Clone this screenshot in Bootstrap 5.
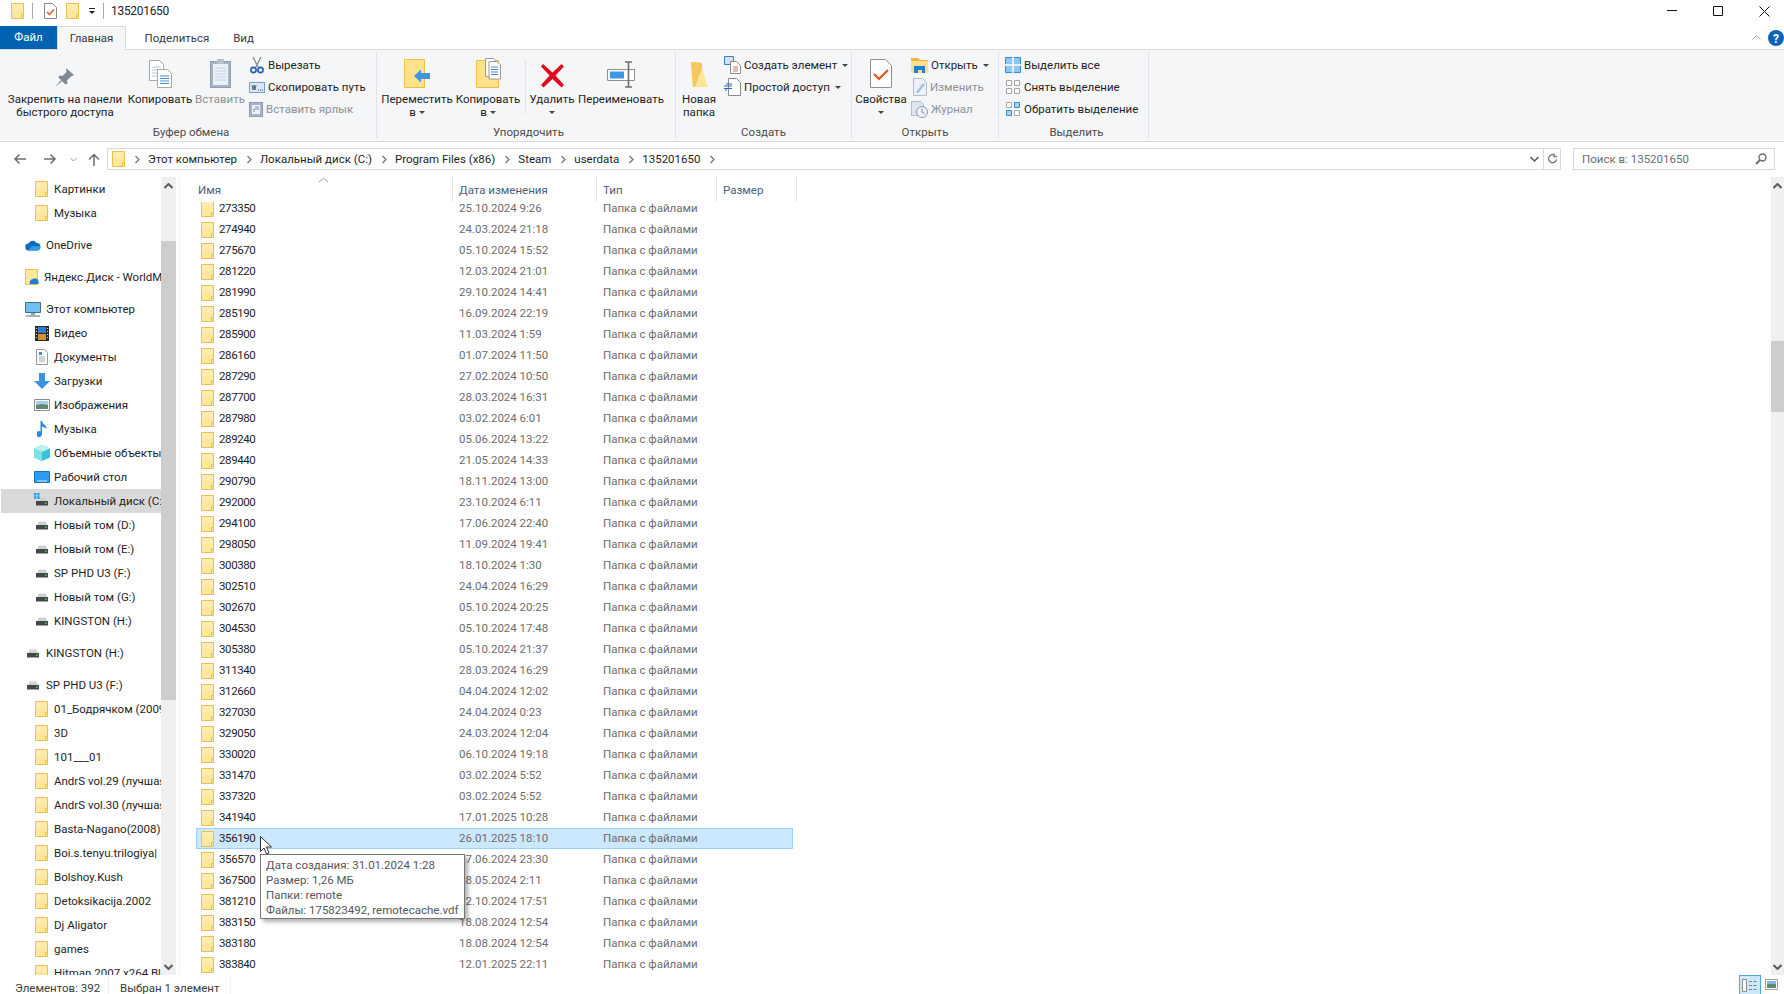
<!DOCTYPE html>
<html lang="ru">
<head>
<meta charset="UTF-8">
<meta name="viewport" content="width=device-width, initial-scale=1.0">
<title>135201650</title>
<link href="https://cdn.jsdelivr.net/npm/bootstrap@5.3.0/dist/css/bootstrap.min.css" rel="stylesheet">
<style>
    html, body { height: 100%; }
    body {
        font-family: Roboto, "Liberation Sans", sans-serif;
        font-size: 11.5px;
        line-height: 13px;
        color: #1e1e1e;
        background: #fff;
        overflow: hidden;
    }
    svg { display: block; flex: none; }

    /* title bar */
    .title-bar { height: 26px; padding: 0 0 4px 11px; }
    .title-sep { width: 1px; height: 16px; background: #a9a9a9; margin-left: 8px; }
    .qa-check { margin-left: 11px; }
    .qa-folder { margin-left: 9px; }
    .qa-drop { margin-left: 9px; }
    .title-sep.after-drop { margin-left: 7px; }
    .title-text { margin-left: 7px; letter-spacing: -.3px; font-size: 12px; }
    .win-btns { margin-right: -3px; }
    .win-btn { width: 46px; height: 22px; display: flex; align-items: center; justify-content: center; }

    /* tabs */
    .tab-strip { height: 24px; border-bottom: 1px solid #dadbdc; }
    .tab-item { height: 24px; display: flex; align-items: center; justify-content: center; color: #3b3b3b; }
    .tab-file { width: 57px; background: #0063b1; color: #fff; height: 23px; }
    .tab-home { width: 69px; background: #f5f6f7; border: 1px solid #dadbdc; border-bottom: 0; }
    .tab-share { width: 95px; padding-left: 7px; }
    .tab-view { width: 45px; }
    .tab-tools { gap: 7px; }

    /* ribbon */
    .ribbon { height: 92px; background: #f5f6f7; border-bottom: 1px solid #dadbdc; padding-top: 2px; }
    .rb-group { height: 86px; display: flex; flex-direction: column; border-right: 1px solid #e1e3e6; }
    .rb-items { display: flex; flex-grow: 1; }
    .rb-label { text-align: center; color: #4c4c4c; line-height: 12px; height: 12px; }
    .rb-big { display: flex; flex-direction: column; align-items: center; text-align: center; white-space: nowrap; }
    .rb-icon { height: 41px; display: flex; align-items: flex-end; padding-bottom: 5px; }
    .rb-big .caret-line { height: 13px; display: flex; align-items: center; justify-content: center; gap: 3px; }
    .rb-small { padding-top: 2px; }
    .rb-small.after-clip { margin-left: 5px; }
    .rb-small.after-new { margin-left: 2px; }
    .rb-small.after-prop { margin-left: 1px; }
    .rb-row { height: 22px; display: flex; align-items: center; white-space: nowrap; }
    .rb-row svg:first-child { margin-right: 3px; }
    .rb-row .ico-shortcut { margin-right: 5px; }
    .rb-row .ico-edit { margin: 0 5px 0 2px; }
    .muted-text { color: #8d9196; }
    .tri { width: 0; height: 0; border-left: 3px solid transparent; border-right: 3px solid transparent; border-top: 3px solid #444; display: inline-block; flex: none; margin-left: 5px; }
    .caret-line .tri { margin-left: 0; }
    .rb-vline { width: 1px; height: 55px; background: #e1e3e6; margin: 7px 1px 0; }
    .g-clip { width: 377px; padding-left: 6px; }
    .g-org { width: 299px; padding-left: 5px; }
    .g-new { width: 176px; }
    .g-open { width: 147px; }
    .g-sel { width: 150px; padding-left: 6px; }
    .w-pin { width: 118px; } .w-copy { width: 72px; } .w-paste { width: 48px; }
    .w-move { width: 70px; } .w-copyto { width: 72px; } .w-del { width: 50px; } .w-ren { width: 88px; }
    .w-newf { width: 46px; } .w-prop { width: 58px; }

    /* address bar */
    .addr-row { height: 35px; padding: 6px 9px 7px 0; }
    .nav-zone { width: 107px; padding-left: 13px; }
    .nav-fwd { margin-left: 16px; }
    .nav-drop { margin-left: 13px; }
    .nav-up { margin-left: 11px; }
    .addr-box { width: 1454px; height: 22px; border: 1px solid #d9d9d9; display: flex; align-items: center; }
    .addr-path { flex-grow: 1; display: flex; align-items: center; padding-left: 4px; white-space: nowrap; }
    .crumb-arrow { margin: 0 8px 0 10px; }
    .addr-end { width: 17px; height: 20px; border-left: 1px solid #d9d9d9; display: flex; align-items: center; justify-content: center; }
    .search-box { width: 202px; height: 22px; border: 1px solid #d9d9d9; margin-left: 12px; display: flex; align-items: center; justify-content: space-between; padding: 0 7px 0 8px; color: #6d6d6d; }

    /* main area */
    .main-area { height: 798px; }
    .side-pane { width: 161px; overflow: hidden; }
    .tree-row { height: 24px; display: flex; align-items: center; white-space: nowrap; overflow: hidden; }
    .tree-row.lvl1 { padding-left: 25px; }
    .tree-row.lvl2 { padding-left: 35px; }
    .tree-row.gap-top { margin-top: 8px; }
    .tree-row.current { background: #d9d9d9; margin-left: 1px; padding-left: 34px; }
    .tree-ico { width: 16px; height: 16px; display: flex; align-items: center; justify-content: center; margin-right: 5px; }
    .lvl2 .tree-ico { width: 13px; margin-right: 6px; }
    .vscroll { background: #f0f0f0; display: flex; flex-direction: column; align-items: center; }
    .vscroll .arr { height: 17px; display: flex; align-items: center; justify-content: center; width: 100%; }
    .vscroll .arr-down { margin-top: auto; }
    .side-scroll { width: 15px; }
    .side-thumb { width: 100%; height: 459px; margin-top: 47px; background: #cdcdcd; }
    .file-scroll { width: 13px; }
    .file-thumb { width: 100%; height: 71px; margin-top: 147px; background: #cdcdcd; }
    .pane-gap { width: 20px; }
    .pane-gap div { width: 1px; height: 100%; background: #f2f2f2; margin-left: 3px; }
    .files-pane { flex-grow: 1; overflow: hidden; }
    .col-head { height: 25px; display: flex; }
    .col-head > div { display: flex; align-items: center; padding: 2px 0 0 6px; color: #4c607a; border-right: 1px solid #e5e5e5; }
    .col-head > div:first-child { padding-left: 2px; }
    .c-name { width: 257px; }
    .c-date { width: 144px; }
    .c-type { width: 120px; }
    .c-size { width: 80px; }
    .file-list { height: 773px; overflow: hidden; }
    .file-rows { margin-top: -4px; }
    .file-row { width: 597px; height: 21px; display: flex; align-items: center; white-space: nowrap; }
    .file-row .c-name { display: flex; align-items: center; gap: 5px; padding-left: 5px; letter-spacing: -.4px; }
    .file-row .c-date, .file-row .c-type { padding-left: 6px; color: #6d6d6d; }
    .file-row.picked { background: #cce8ff; box-shadow: inset 0 0 0 1px #99d1ff; }

    /* status bar */
    .status-bar { height: 19px; }
    .status-cell { padding: 7px 0 0 15px; width: 109px; height: 19px; display: flex; align-items: center; color: #3c3c3c; border-right: 1px solid #f0f0f0; }
    .status-cell + .status-cell { padding-left: 11px; width: 122px; }
    .view-btns { padding-right: 6px; gap: 4px; }
    .view-on { width: 22px; height: 19px; background: #cce8f7; border: 1px solid #4aa8dc; border-bottom: 0; display: flex; align-items: center; justify-content: center; }

    /* overlays */
    .hover-tip {
        position: absolute; left: 260px; top: 854px; width: 205px; height: 65px;
        background: #fff; border: 1px solid #767676; box-shadow: 3px 3px 4px rgba(0,0,0,.3);
        color: #575757; padding: 3px 5px; line-height: 15px; white-space: nowrap;
    }
    .mouse-arrow { position: absolute; left: 260px; top: 836px; }
    .sort-mark { position: absolute; left: 318px; top: 177px; }
</style>
</head>
<body class="d-flex flex-column position-relative">

<svg width="0" height="0" class="position-absolute">
    <symbol id="fld" viewBox="0 0 13 16">
        <path d="M.5.5h12v15H.5z" fill="#ffe79c" stroke="#eac14f"/>
        <path d="M1 1h11v6H1z" fill="#fff0b8" opacity=".7"/>
        <path d="M10.500 15v-3.500h2" fill="none" stroke="#eac14f"/>
    </symbol>
    <symbol id="drv" viewBox="0 0 16 16">
        <path d="M3 8 4.500 4.500h7L13 8z" fill="#cfd1d3"/>
        <path d="M2 8h12v4.500H2z" fill="#45484a"/>
        <path d="M11 9.500h1.500v1.500H11z" fill="#4fd24f"/>
    </symbol>
    <symbol id="grid-off" viewBox="0 0 16 16">
        <path d="M1.500 1.500h5v5h-5zM9.500 1.500h5v5h-5zM1.500 9.500h5v5h-5zM9.500 9.500h5v5h-5z" fill="#fff" stroke="#a5a5a5"/>
    </symbol>
    <symbol id="crumb" viewBox="0 0 5 9">
        <path d="M.5 1l3.500 3.500L.5 8" fill="none" stroke="#777" stroke-width="1.300"/>
    </symbol>
</svg>

<!-- Title bar -->
<div class="title-bar d-flex align-items-center">
    <svg width="13" height="16"><use href="#fld"/></svg>
    <div class="title-sep"></div>
    <svg class="qa-check" width="13" height="16" viewBox="0 0 13 16">
        <path d="M.5.5h8l4 4v11H.5z" fill="#fff" stroke="#8a8a8a"/>
        <path d="M3 9l2.500 2.500L10 6.500" fill="none" stroke="#e2552a" stroke-width="1.500"/>
    </svg>
    <svg class="qa-folder" width="13" height="16"><use href="#fld"/></svg>
    <svg class="qa-drop" width="8" height="8" viewBox="0 0 8 8">
        <path d="M1 1.500h6" stroke="#222"/><path d="M1 4h6L4 7z" fill="#222"/>
    </svg>
    <div class="title-sep after-drop"></div>
    <span class="title-text">135201650</span>
    <div class="ms-auto d-flex win-btns">
        <div class="win-btn"><svg width="10" height="2"><path d="M0 .5h10" stroke="#111"/></svg></div>
        <div class="win-btn"><svg width="10" height="10"><path d="M.5.5h9v9h-9z" fill="none" stroke="#111"/></svg></div>
        <div class="win-btn"><svg width="11" height="11"><path d="M.5.5l10 10M10.500.5l-10 10" stroke="#111"/></svg></div>
    </div>
</div>

<!-- Tabs -->
<div class="tab-strip d-flex">
    <div class="tab-item tab-file">Файл</div>
    <div class="tab-item tab-home">Главная</div>
    <div class="tab-item tab-share">Поделиться</div>
    <div class="tab-item tab-view">Вид</div>
    <div class="ms-auto d-flex align-items-center tab-tools">
        <svg width="9" height="5"><path d="M.5 4.500l4-4 4 4" fill="none" stroke="#a8a8a8"/></svg>
        <svg width="16" height="16" viewBox="0 0 16 16">
            <circle cx="8" cy="8" r="8" fill="#0a63b5"/>
            <text x="8" y="12.500" text-anchor="middle" fill="#fff" font-family="Roboto" font-weight="700" font-size="12">?</text>
        </svg>
    </div>
</div>

<!-- Ribbon -->
<div class="ribbon d-flex">
    <div class="rb-group g-clip">
        <div class="rb-items">
            <div class="rb-big w-pin">
                <div class="rb-icon"><svg width="22" height="21" viewBox="0 0 22 21">
                    <path d="M12 1l8 7-3 1.500-4 4 .5 3-2 1-7-7 1-2 3 .5 4-4z" fill="#7f8896"/>
                    <path d="M7 12.500L1 20l7-5.500z" fill="#9aa2ad"/>
                </svg></div>
                Закрепить на панели<br>быстрого доступа
            </div>
            <div class="rb-big w-copy">
                <div class="rb-icon"><svg width="23" height="28" viewBox="0 0 23 28">
                    <path d="M.5.5h10l4 4v16H.5z" fill="#fff" stroke="#a7a7a7"/>
                    <path d="M3 7h9M3 10h9M3 13h9M3 16h9" stroke="#b9c6d8"/>
                    <path d="M8.500 9.500h10l4 4v14h-14z" fill="#fff" stroke="#a7a7a7"/>
                    <path d="M11 16h9M11 18.500h9M11 21h9M11 23.500h9" stroke="#4d86d4" stroke-width="1.200"/>
                </svg></div>
                Копировать
            </div>
            <div class="rb-big w-paste muted-text">
                <div class="rb-icon"><svg width="21" height="30" viewBox="0 0 21 30">
                    <rect x=".5" y="3.500" width="20" height="26" fill="#a7b3c6" stroke="#8e9bb0"/>
                    <rect x="3" y="6" width="15" height="21" fill="#eaf0f8"/>
                    <path d="M5 10h11M5 13h11M5 16h11M5 19h11M5 22h11" stroke="#c6d3e6"/>
                    <rect x="7" y="1" width="7" height="5" fill="#b7bfcb"/>
                </svg></div>
                Вставить
            </div>
            <div class="rb-small after-clip">
                <div class="rb-row"><svg width="16" height="18" viewBox="0 0 16 18">
                    <path d="M4 1l5 10M12 1L7 11" stroke="#8b8b8b" stroke-width="1.300"/>
                    <circle cx="4.500" cy="14" r="2.600" fill="none" stroke="#1f5fb4" stroke-width="1.600"/>
                    <circle cx="11.500" cy="14" r="2.600" fill="none" stroke="#1f5fb4" stroke-width="1.600"/>
                </svg>Вырезать</div>
                <div class="rb-row"><svg width="16" height="11" viewBox="0 0 16 11">
                    <path d="M.5.5h15v10H.5z" fill="#dbe9f7" stroke="#6fa0d2"/>
                    <path d="M3 3l1 5 1-5 1 5 1-5" fill="none" stroke="#4b4b4b" stroke-width=".8"/>
                    <path d="M9 8h1M11 8h1M13 8h1" stroke="#4b4b4b"/>
                </svg>Скопировать путь</div>
                <div class="rb-row muted-text"><svg class="ico-shortcut" width="14" height="16" viewBox="0 0 14 16">
                    <rect x=".5" y="1.500" width="13" height="14" fill="#a9b6c9" stroke="#8e9bb0"/>
                    <rect x="3" y="4" width="8" height="9" fill="#eef2f8"/>
                    <path d="M5 11V8h3M6 6h3v3" fill="none" stroke="#7f8fa6"/>
                </svg>Вставить ярлык</div>
            </div>
        </div>
        <div class="rb-label">Буфер обмена</div>
    </div>

    <div class="rb-group g-org">
        <div class="rb-items">
            <div class="rb-big w-move">
                <div class="rb-icon"><svg width="27" height="29" viewBox="0 0 27 29">
                    <path d="M.5.5h20v28H.5z" fill="#ffe28a" stroke="#e9bf4c"/>
                    <path d="M10 17l7-6.500V14h9v6h-9v3.500z" fill="#3f96e3"/>
                </svg></div>
                Переместить
                <div class="caret-line">в <span class="tri"></span></div>
            </div>
            <div class="rb-big w-copyto">
                <div class="rb-icon"><svg width="25" height="31" viewBox="0 0 25 31">
                    <path d="M.5 3.500h22v27H.5z" fill="#ffe28a" stroke="#e9bf4c"/>
                    <path d="M9.500 1.500h8l4 4v14h-12z" fill="#fff" stroke="#9a9a9a"/>
                    <path d="M13 4.500h8l3.500 3.500v14H13z" fill="#fff" stroke="#9a9a9a"/>
                    <path d="M15 10h7M15 12.500h7M15 15h7M15 17.500h7" stroke="#4d86d4"/>
                </svg></div>
                Копировать
                <div class="caret-line">в <span class="tri"></span></div>
            </div>
            <div class="rb-vline"></div>
            <div class="rb-big w-del">
                <div class="rb-icon"><svg width="25" height="25" viewBox="0 0 25 25">
                    <path d="M3 1l9.500 8.500L21.500 1 24 3.500 15.500 12.500 24 22l-2.500 2.500-9-8.500-9 8.500L1 22l8.500-9.500L1 3.500z" fill="#df0c1d"/>
                </svg></div>
                Удалить
                <div class="caret-line"><span class="tri"></span></div>
            </div>
            <div class="rb-big w-ren">
                <div class="rb-icon"><svg width="29" height="27" viewBox="0 0 29 27">
                    <path d="M.5 8.500h27v11H.5z" fill="#fff" stroke="#8f8f8f"/>
                    <rect x="3" y="10.500" width="14" height="7" fill="#3f96e3"/>
                    <path d="M18 1h7M18 26h7M21.500 1v25" stroke="#6f6f6f" stroke-width="1.600"/>
                </svg></div>
                Переименовать
            </div>
        </div>
        <div class="rb-label">Упорядочить</div>
    </div>

    <div class="rb-group g-new">
        <div class="rb-items">
            <div class="rb-big w-newf">
                <div class="rb-icon"><svg width="19" height="27" viewBox="0 0 19 27">
                    <path d="M1 1l11 1v6l5 17-14 1z" fill="#ffd970"/>
                    <path d="M1 1l11 1v6L5 26H3z" fill="#f4c95a"/>
                    <path d="M12 8l6 18H5z" fill="#ffe596"/>
                </svg></div>
                Новая<br>папка
            </div>
            <div class="rb-small after-new">
                <div class="rb-row"><svg width="17" height="18" viewBox="0 0 17 18">
                    <path d="M.5.5h9v8h-9z" fill="#cfe3f6" stroke="#3b7fc4"/>
                    <path d="M6.500 5.500h6l4 4v8h-10z" fill="#fff" stroke="#8a8a8a"/>
                    <path d="M9 11h5M9 13h5M9 15h5" stroke="#c77"/>
                </svg>Создать элемент<span class="tri"></span></div>
                <div class="rb-row"><svg width="17" height="18" viewBox="0 0 17 18">
                    <path d="M4.500.5h8l4 4v13h-12z" fill="#fff" stroke="#8a8a8a"/>
                    <path d="M0 8h8M2 6h6M0 10.500h8M2 10v3" stroke="#2b6cb4"/>
                </svg>Простой доступ<span class="tri"></span></div>
            </div>
        </div>
        <div class="rb-label">Создать</div>
    </div>

    <div class="rb-group g-open">
        <div class="rb-items">
            <div class="rb-big w-prop">
                <div class="rb-icon"><svg width="22" height="29" viewBox="0 0 22 29">
                    <path d="M.5.500h15l6 6v22H.5z" fill="#fff" stroke="#8f8f8f"/>
                    <path d="M4 15l5 5 9-9" fill="none" stroke="#e8521f" stroke-width="2.200"/>
                </svg></div>
                Свойства
                <div class="caret-line"><span class="tri"></span></div>
            </div>
            <div class="rb-small after-prop">
                <div class="rb-row"><svg width="17" height="15" viewBox="0 0 17 15">
                    <path d="M0 0h7l2 2h8v13H0z" fill="#f2b43a"/>
                    <path d="M0 3h17v12H0z" fill="#ffe08a"/>
                    <path d="M3 8h11v7h-3v-3H7v3H3z" fill="#1e7fd0"/>
                </svg>Открыть<span class="tri"></span></div>
                <div class="rb-row muted-text"><svg class="ico-edit" width="14" height="18" viewBox="0 0 14 18">
                    <path d="M.5.5h9l4 4v13H.5z" fill="#eef2f8" stroke="#b3bccb"/>
                    <path d="M3 14l7-9 2 1.500-7 9z" fill="#a9c2e2"/>
                </svg>Изменить</div>
                <div class="rb-row muted-text"><svg width="17" height="17" viewBox="0 0 17 17">
                    <path d="M.5.5h9l3 3v11H.5z" fill="#dfe5ee" stroke="#b3bccb"/>
                    <circle cx="11" cy="11" r="5.500" fill="#eef2f8" stroke="#8d99aa"/>
                    <path d="M11 7.500V11l2.500 1.500" fill="none" stroke="#7f8b9c"/>
                </svg>Журнал</div>
            </div>
        </div>
        <div class="rb-label">Открыть</div>
    </div>

    <div class="rb-group g-sel">
        <div class="rb-items">
            <div class="rb-small">
                <div class="rb-row"><svg width="16" height="16" viewBox="0 0 16 16">
                    <path d="M.5.5h15v15H.5z" fill="#8fc7f2" stroke="#2e8fdb"/>
                    <path d="M8 0v16M0 8h16" stroke="#fff" stroke-width="1.500"/>
                </svg>Выделить все</div>
                <div class="rb-row"><svg width="16" height="16"><use href="#grid-off"/></svg>Снять выделение</div>
                <div class="rb-row"><svg width="16" height="16" viewBox="0 0 16 16">
                    <path d="M1.500 1.500h5v5h-5zM9.500 9.500h5v5h-5z" fill="#fff" stroke="#a5a5a5"/>
                    <path d="M9.500 1.500h5v5h-5zM1.500 9.500h5v5h-5z" fill="#a8d4f5" stroke="#2e8fdb"/>
                </svg>Обратить выделение</div>
            </div>
        </div>
        <div class="rb-label">Выделить</div>
    </div>
</div>

<!-- Address bar -->
<div class="addr-row d-flex">
    <div class="nav-zone d-flex align-items-center">
        <svg width="14" height="12" viewBox="0 0 14 12"><path d="M13 6H2M6.500 1.500L2 6l4.500 4.500" fill="none" stroke="#6e6e6e" stroke-width="1.500"/></svg>
        <svg class="nav-fwd" width="14" height="12" viewBox="0 0 14 12"><path d="M1 6h11M7.500 1.500L12 6l-4.500 4.500" fill="none" stroke="#6e6e6e" stroke-width="1.500"/></svg>
        <svg class="nav-drop" width="7" height="5" viewBox="0 0 7 5"><path d="M.5 1l3 3 3-3" fill="none" stroke="#9a9a9a"/></svg>
        <svg class="nav-up" width="12" height="13" viewBox="0 0 12 13"><path d="M6 13V2M1 6.500L6 1.500l5 5" fill="none" stroke="#6e6e6e" stroke-width="1.500"/></svg>
    </div>
    <div class="addr-box">
        <div class="addr-path">
            <svg width="13" height="16"><use href="#fld"/></svg>
            <svg class="crumb-arrow" width="5" height="9"><use href="#crumb"/></svg>
            <span>Этот компьютер</span>
            <svg class="crumb-arrow" width="5" height="9"><use href="#crumb"/></svg>
            <span>Локальный диск (C:)</span>
            <svg class="crumb-arrow" width="5" height="9"><use href="#crumb"/></svg>
            <span>Program Files (x86)</span>
            <svg class="crumb-arrow" width="5" height="9"><use href="#crumb"/></svg>
            <span>Steam</span>
            <svg class="crumb-arrow" width="5" height="9"><use href="#crumb"/></svg>
            <span>userdata</span>
            <svg class="crumb-arrow" width="5" height="9"><use href="#crumb"/></svg>
            <span>135201650</span>
            <svg class="crumb-arrow" width="5" height="9"><use href="#crumb"/></svg>
        </div>
        <svg width="9" height="6" viewBox="0 0 9 6" class="me-1"><path d="M.5 1l4 4 4-4" fill="none" stroke="#555" stroke-width="1.500"/></svg>
        <div class="addr-end">
            <svg width="11" height="12" viewBox="0 0 11 12"><path d="M9.500 6.500a4 4 0 1 1-2-4.300M7 .5v3h3" fill="none" stroke="#777" stroke-width="1.300"/></svg>
        </div>
    </div>
    <div class="search-box">
        <span>Поиск в: 135201650</span>
        <svg width="12" height="12" viewBox="0 0 12 12"><circle cx="7.500" cy="4.500" r="3.500" fill="none" stroke="#6d6d6d" stroke-width="1.400"/><path d="M5 7l-4 4" stroke="#6d6d6d" stroke-width="2"/></svg>
    </div>
</div>

<!-- Main area -->
<div class="main-area d-flex">
    <div class="side-pane" id="treePane"></div>
    <div class="vscroll side-scroll">
        <div class="side-thumb"></div>
    </div>
    <div class="pane-gap"><div></div></div>
    <div class="files-pane">
        <div class="col-head">
            <div class="c-name">Имя</div>
            <div class="c-date">Дата изменения</div>
            <div class="c-type">Тип</div>
            <div class="c-size">Размер</div>
        </div>
        <div class="file-list"><div class="file-rows" id="fileRows"></div></div>
    </div>
    <div class="vscroll file-scroll">
        <div class="file-thumb"></div>
    </div>
</div>

<!-- Status bar -->
<div class="status-bar d-flex">
    <div class="status-cell">Элементов: 392</div>
    <div class="status-cell">Выбран 1 элемент</div>
    <div class="ms-auto d-flex align-items-center view-btns">
        <div class="view-on">
            <svg width="16" height="13" viewBox="0 0 16 13">
                <path d="M.5.5h4v12h-4z" fill="#fff" stroke="#8c8c8c"/>
                <path d="M7 2.500h3M11.500 2.500h3M7 6.500h3M11.500 6.500h3M7 10.500h3M11.500 10.500h3" stroke="#7f7f7f"/>
            </svg>
        </div>
        <svg width="13" height="11" viewBox="0 0 13 11">
            <path d="M.5.5h12v10H.5z" fill="#fff" stroke="#a0a0a0"/>
            <path d="M2 2h9v3H2z" fill="#7db8e8"/><path d="M2 5h9v4H2z" fill="#5f8a6c"/>
        </svg>
    </div>
</div>

<!-- Overlays -->
<svg class="sort-mark" width="11" height="6" viewBox="0 0 11 6"><path d="M1 5l4.500-4L10 5" fill="none" stroke="#a0a0a0"/></svg>
<div class="hover-tip">
    Дата создания: 31.01.2024 1:28<br>
    Размер: 1,26 МБ<br>
    Папки: remote<br>
    Файлы: 175823492, remotecache.vdf
</div>
<svg class="mouse-arrow" width="13" height="19" viewBox="0 0 13 19">
    <path d="M.5.5v15l3.500-3.500 2.500 6 2.500-1-2.500-6h5z" fill="#fff" stroke="#333"/>
</svg>

<script src="https://cdn.jsdelivr.net/npm/bootstrap@5.3.0/dist/js/bootstrap.bundle.min.js"></script>
<script>
    // sidebar icons
    const icons = {
        fld: '<svg width="13" height="16"><use href="#fld"/></svg>',
        drv: '<svg width="16" height="16"><use href="#drv"/></svg>',
        cloud: '<svg width="16" height="11" viewBox="0 0 16 11"><path d="M4 10.500a3.500 3.500 0 0 1-.5-7A4.500 4.500 0 0 1 11.500 3a3.500 3.500 0 0 1 .5 7.500z" fill="#0f6cbd"/><path d="M3 10.500h10a3 3 0 0 0 1.500-4.500l-8 .5z" fill="#2d9fe6"/></svg>',
        yadisk: '<svg width="14" height="16" viewBox="0 0 14 16"><path d="M.5.5h12v15H.5z" fill="#ffe79c" stroke="#eac14f"/><path d="M5 15a3.500 3.500 0 0 1 3-5 3.500 3.500 0 0 1 5.500 2.500A2 2 0 0 1 13 15z" fill="#1f7fd4"/></svg>',
        pc: '<svg width="16" height="15" viewBox="0 0 16 15"><path d="M.5.5h15v10H.5z" fill="#6fc0f2" stroke="#4a6b84"/><path d="M6 11h4v2H6z" fill="#8aa"/><path d="M1 14h14" stroke="#8a9aa8" stroke-width="1.500"/></svg>',
        video: '<svg width="14" height="15" viewBox="0 0 14 15"><path d="M0 0h14v15H0z" fill="#2b2b2b"/><path d="M3 1h8v6H3z" fill="#2e7fd0"/><path d="M3 8h8v6H3z" fill="#d8912c"/><path d="M1 2h1v1H1zM1 5h1v1H1zM1 8h1v1H1zM1 11h1v1H1zM12 2h1v1h-1zM12 5h1v1h-1zM12 8h1v1h-1zM12 11h1v1h-1z" fill="#ddd"/></svg>',
        docs: '<svg width="12" height="16" viewBox="0 0 12 16"><path d="M.5.5h8l3 3v12H.5z" fill="#fff" stroke="#9a9a9a"/><path d="M3 8h6M3 10h6M3 12h6" stroke="#9aa"/><path d="M3 3h3v3H3z" fill="#3a8fdc"/></svg>',
        down: '<svg width="16" height="16" viewBox="0 0 16 16"><path d="M5 0h6v8h5l-8 8-8-8h5z" fill="#3b93e0"/></svg>',
        pics: '<svg width="16" height="12" viewBox="0 0 16 12"><path d="M.5.5h15v11H.5z" fill="#fff" stroke="#8c8c8c"/><path d="M2 2h12v4H2z" fill="#a8cdee"/><path d="M2 6l6-1 6 1v4H2z" fill="#5e8a70"/></svg>',
        note: '<svg width="10" height="16" viewBox="0 0 10 16"><path d="M3.500 0H5c0 3 5 4 4.500 8C8.500 6.500 6.500 6 5 5.500V13a3 3 0 1 1-1.500-2.500z" fill="#2b8ade"/></svg>',
        cube: '<svg width="16" height="16" viewBox="0 0 16 16"><path d="M8 0l8 3.500v9L8 16 0 12.500v-9z" fill="#35c4d6"/><path d="M8 7v9L0 12.500v-9z" fill="#7fe0ea"/><path d="M8 7l8-3.500L8 0 0 3.500z" fill="#bdeff4"/></svg>',
        desk: '<svg width="16" height="12" viewBox="0 0 16 12"><path d="M.5.5h15v11H.5z" fill="#2f9bef" stroke="#1673c4"/><path d="M3 10h10" stroke="#cde8ff"/></svg>',
        cdrv: '<svg width="16" height="16" viewBox="0 0 16 16"><path d="M3 8 4.500 4.500h7L13 8z" fill="#cfd1d3"/><path d="M2 8h12v4.500H2z" fill="#45484a"/><path d="M11 9.500h1.500v1.500H11z" fill="#4fd24f"/><path d="M0 0h2.500v2.500H0zM3.200 0h2.500v2.500H3.200zM0 3.200h2.500v2.500H0zM3.200 3.200h2.500v2.500H3.200z" fill="#1aa5ea"/></svg>'
    };

    // [icon, text, level, extra class]
    const tree = [
        ['fld', 'Картинки', 2], ['fld', 'Музыка', 2],
        ['cloud', 'OneDrive', 1, 'gap-top'],
        ['yadisk', 'Яндекс.Диск - WorldMusic', 1, 'gap-top'],
        ['pc', 'Этот компьютер', 1, 'gap-top'],
        ['video', 'Видео', 2], ['docs', 'Документы', 2], ['down', 'Загрузки', 2],
        ['pics', 'Изображения', 2], ['note', 'Музыка', 2], ['cube', 'Объемные объекты', 2],
        ['desk', 'Рабочий стол', 2], ['cdrv', 'Локальный диск (C:)', 2, 'current'],
        ['drv', 'Новый том (D:)', 2], ['drv', 'Новый том (E:)', 2], ['drv', 'SP PHD U3 (F:)', 2],
        ['drv', 'Новый том (G:)', 2], ['drv', 'KINGSTON (H:)', 2],
        ['drv', 'KINGSTON (H:)', 1, 'gap-top'],
        ['drv', 'SP PHD U3 (F:)', 1, 'gap-top'],
        ['fld', '01_Бодрячком (2009)', 2], ['fld', '3D', 2], ['fld', '101___01', 2],
        ['fld', 'AndrS vol.29 (лучшая)', 2], ['fld', 'AndrS vol.30 (лучшая)', 2],
        ['fld', 'Basta-Nagano(2008)', 2], ['fld', 'Boi.s.tenyu.trilogiya|', 2],
        ['fld', 'Bolshoy.Kush', 2], ['fld', 'Detoksikacija.2002', 2], ['fld', 'Dj Aligator', 2],
        ['fld', 'games', 2], ['fld', 'Hitman 2007 x264 BluRay', 2]
    ];

    document.getElementById('treePane').innerHTML = tree.map(t =>
        `<div class="tree-row lvl${t[2]} ${t[3] || ''}"><span class="tree-ico">${icons[t[0]]}</span>${t[1]}</div>`
    ).join('');

    const files = [
        ['273350', '25.10.2024 9:26'], ['274940', '24.03.2024 21:18'], ['275670', '05.10.2024 15:52'],
        ['281220', '12.03.2024 21:01'], ['281990', '29.10.2024 14:41'], ['285190', '16.09.2024 22:19'],
        ['285900', '11.03.2024 1:59'], ['286160', '01.07.2024 11:50'], ['287290', '27.02.2024 10:50'],
        ['287700', '28.03.2024 16:31'], ['287980', '03.02.2024 6:01'], ['289240', '05.06.2024 13:22'],
        ['289440', '21.05.2024 14:33'], ['290790', '18.11.2024 13:00'], ['292000', '23.10.2024 6:11'],
        ['294100', '17.06.2024 22:40'], ['298050', '11.09.2024 19:41'], ['300380', '18.10.2024 1:30'],
        ['302510', '24.04.2024 16:29'], ['302670', '05.10.2024 20:25'], ['304530', '05.10.2024 17:48'],
        ['305380', '05.10.2024 21:37'], ['311340', '28.03.2024 16:29'], ['312660', '04.04.2024 12:02'],
        ['327030', '24.04.2024 0:23'], ['329050', '24.03.2024 12:04'], ['330020', '06.10.2024 19:18'],
        ['331470', '03.02.2024 5:52'], ['337320', '03.02.2024 5:52'], ['341940', '17.01.2025 10:28'],
        ['356190', '26.01.2025 18:10'], ['356570', '27.06.2024 23:30'], ['367500', '28.05.2024 2:11'],
        ['381210', '12.10.2024 17:51'], ['383150', '18.08.2024 12:54'], ['383180', '18.08.2024 12:54'],
        ['383840', '12.01.2025 22:11']
    ];

    document.getElementById('fileRows').innerHTML = files.map(f => `
        <div class="file-row ${f[0] === '356190' ? 'picked' : ''}">
            <div class="c-name"><svg width="13" height="16"><use href="#fld"/></svg>${f[0]}</div>
            <div class="c-date">${f[1]}</div>
            <div class="c-type">Папка с файлами</div>
        </div>`).join('');

    // scrollbar arrows
    document.querySelectorAll('.vscroll').forEach(bar => {
        const chev = d => `<svg width="9" height="6" viewBox="0 0 9 6"><path d="${d}" fill="none" stroke="#5a5a5a" stroke-width="2"/></svg>`;
        bar.insertAdjacentHTML('afterbegin', `<div class="arr">${chev('M.5 5l4-4 4 4')}</div>`);
        bar.insertAdjacentHTML('beforeend', `<div class="arr arr-down">${chev('M.5 1l4 4 4-4')}</div>`);
    });
</script>
</body>
</html>
